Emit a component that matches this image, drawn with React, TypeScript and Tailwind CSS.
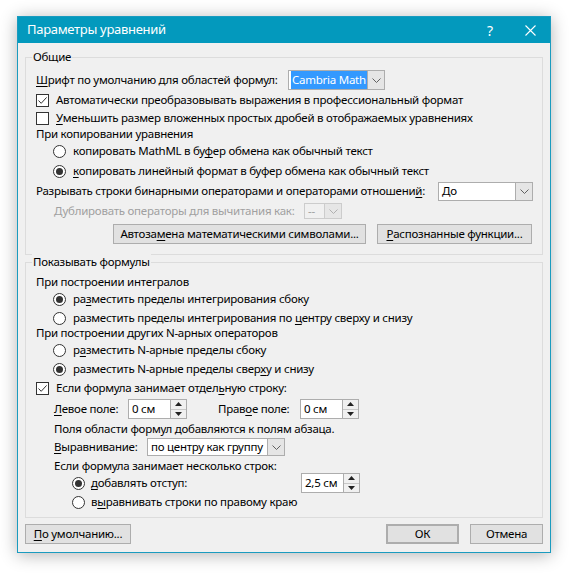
import React from "react";

const font = { fontFamily: '"Noto Sans", "Open Sans", sans-serif' };

function U({ children }: { children: React.ReactNode }) {
    return <span className="underline underline-offset-2 decoration-1">{children}</span>;
}

function Check({ checked }: { checked?: boolean }) {
    return (
        <span className="w-[13px] h-[13px] shrink-0 border border-[#333] bg-white flex items-center justify-center">
            {checked && (
                <svg width="11" height="11" viewBox="0 0 11 11">
                    <path d="M1.5 5.5 L4.2 8.3 L9.6 2.4" fill="none" stroke="#333" strokeWidth="1" />
                </svg>
            )}
        </span>
    );
}

function Radio({ checked }: { checked?: boolean }) {
    return (
        <span className="w-[13px] h-[13px] shrink-0 rounded-full border border-[#333] bg-white flex items-center justify-center">
            {checked && <span className="w-[7px] h-[7px] rounded-full bg-[#333]" />}
        </span>
    );
}

function Chevron({ color = "#606060" }: { color?: string }) {
    return (
        <svg width="9" height="5" viewBox="0 0 9 5">
            <path d="M0.5 0.5 L4.5 4.5 L8.5 0.5" fill="none" stroke={color} strokeWidth="1" />
        </svg>
    );
}

function Combo({ value, className, selected, disabled }: { value: string; className: string; selected?: boolean; disabled?: boolean }) {
    return (
        <div className={`flex shrink-0 border ${disabled ? "border-[#cccccc] bg-[#f0f0f0]" : "border-[#adadad] bg-white"} ${className}`}>
            <div className="flex-1 flex items-center pl-[2px] overflow-hidden">
                <span className={selected ? "bg-[#3399ff] text-white px-[1px]" : disabled ? "text-[#a0a0a0] px-[1px]" : "px-[1px]"}>{value}</span>
            </div>
            <div className={`w-[17px] flex items-center justify-center border-l ${disabled ? "border-[#cccccc] bg-[#e6e6e6]" : "border-[#adadad] bg-[#e5e5e5]"}`}>
                <Chevron color={disabled ? "#b0b0b0" : "#606060"} />
            </div>
        </div>
    );
}

function Spin({ value }: { value: string }) {
    return (
        <div className="w-[59px] h-[20px] shrink-0 flex border border-[#adadad] bg-white">
            <div className="flex-1 flex items-center pl-[3px]">{value}</div>
            <div className="w-[16px] flex flex-col border-l border-[#adadad] bg-[#f0f0f0]">
                <div className="flex-1 flex items-center justify-center border-b border-[#c8c8c8]">
                    <svg width="7" height="4" viewBox="0 0 7 4"><path d="M0 4 L3.5 0 L7 4 Z" fill="#222" /></svg>
                </div>
                <div className="flex-1 flex items-center justify-center">
                    <svg width="7" height="4" viewBox="0 0 7 4"><path d="M0 0 L3.5 4 L7 0 Z" fill="#222" /></svg>
                </div>
            </div>
        </div>
    );
}

function Btn({ children, className }: { children: React.ReactNode; className: string }) {
    return (
        <div className={`h-[20px] shrink-0 flex items-center justify-center bg-[#e1e1e1] border border-[#adadad] ${className}`}>
            {children}
        </div>
    );
}

function Group({ title, className, children }: { title: string; className: string; children: React.ReactNode }) {
    return (
        <div className={`relative border border-[#dcdcdc] ${className}`}>
            <span className="absolute -top-[9px] left-[6px] px-[1px] bg-[#f0f0f0] leading-[16px]">{title}</span>
            {children}
        </div>
    );
}

export default function App() {
    return (
        <div className="w-[572px] h-[575px] bg-white pt-[16px] pl-[17px] text-[11.5px] tracking-[-0.25px] text-black whitespace-nowrap" style={font}>
            <div className="w-[534px] h-[537px] flex flex-col bg-[#f0f0f0] border border-[#1a9bbf] shadow-[0_2px_16px_rgba(0,0,0,0.3)]">
                {/* заголовок */}
                <div className="h-[26px] shrink-0 bg-[#0399bd] flex items-center pl-[9px] text-white">
                    <span className="text-[13px] tracking-[-0.3px] flex-1">Параметры уравнений</span>
                    <span className="text-[14px] w-[14px] mr-[28px] text-center">?</span>
                    <svg width="11" height="11" viewBox="0 0 11 11" className="mr-[14px]">
                        <path d="M0.5 0.5 L10.5 10.5 M10.5 0.5 L0.5 10.5" stroke="#fff" strokeWidth="1.1" />
                    </svg>
                </div>

                <div className="flex-1 px-[7px] pt-[14px]">
                    <Group title="Общие" className="h-[198px] pl-[10px] pt-[14px]">
                        <div className="h-[16px] flex items-center">
                            <span className="w-[252px]"><U>Ш</U>рифт по умолчанию для областей формул:</span>
                            <Combo value="Cambria Math" selected className="w-[97px] h-[20px]" />
                        </div>
                        <div className="h-[16px] mt-[4px] flex items-center gap-[7px]">
                            <Check checked />
                            <span>Автоматически преобразовывать выражения в профессиональный формат</span>
                        </div>
                        <div className="h-[16px] mt-[2px] flex items-center gap-[7px]">
                            <Check />
                            <span><U>У</U>меньшить размер вложенных простых дробей в отображаемых уравнениях</span>
                        </div>
                        <div className="h-[16px] flex items-center">При копировании уравнения</div>
                        <div className="h-[16px] mt-[1px] pl-[17px] flex items-center gap-[7px]">
                            <Radio />
                            <span>копировать MathML в бу<U>ф</U>ер обмена как обычный текст</span>
                        </div>
                        <div className="h-[16px] mt-[4px] pl-[17px] flex items-center gap-[7px]">
                            <Radio checked />
                            <span><U>к</U>опировать линейный формат в буфер обмена как обычный текст</span>
                        </div>
                        <div className="h-[16px] mt-[4px] flex items-center">
                            <span className="w-[402px]">Разрывать строки бинарными операторами и операторами отношени<U>й</U>:</span>
                            <Combo value="До" className="w-[95px] h-[19px]" />
                        </div>
                        <div className="h-[16px] mt-[4px] pl-[18px] flex items-center">
                            <span className="w-[250px] text-[#a0a0a0]">Дублировать операторы для вычитания как:</span>
                            <Combo value="--" disabled className="w-[38px] h-[16px]" />
                        </div>
                        <div className="mt-[5px] pl-[77px] flex gap-[11px]">
                            <Btn className="w-[253px]">Автоза<U>м</U>ена математическими символами...</Btn>
                            <Btn className="w-[155px]"><U>Р</U>аспознанные функции...</Btn>
                        </div>
                    </Group>

                    <Group title="Показывать формулы" className="h-[256px] mt-[7px] pl-[10px] pt-[11px]">
                        <div className="h-[16px] flex items-center">При построении интегралов</div>
                        <div className="h-[16px] mt-[1px] pl-[17px] flex items-center gap-[7px]">
                            <Radio checked />
                            <span>ра<U>з</U>местить пределы интегрирования сбоку</span>
                        </div>
                        <div className="h-[16px] mt-[3px] pl-[17px] flex items-center gap-[7px]">
                            <Radio />
                            <span>разместить пределы интегрирования по <U>ц</U>ентру сверху и снизу</span>
                        </div>
                        <div className="h-[16px] -mt-[1px] flex items-center">При построении других N-арных операторов</div>
                        <div className="h-[16px] mt-[1px] pl-[17px] flex items-center gap-[7px]">
                            <Radio />
                            <span>р<U>а</U>зместить N-арные пределы сбоку</span>
                        </div>
                        <div className="h-[16px] mt-[3px] pl-[17px] flex items-center gap-[7px]">
                            <Radio checked />
                            <span>разместить N-арные пределы свер<U>х</U>у и снизу</span>
                        </div>
                        <div className="h-[16px] mt-[3px] flex items-center gap-[7px]">
                            <Check checked />
                            <span>Если формула занимает отдел<U>ь</U>ную строку:</span>
                        </div>
                        <div className="h-[16px] mt-[5px] pl-[18px] flex items-center">
                            <span className="w-[74px]"><U>Л</U>евое поле:</span>
                            <Spin value="0 см" />
                            <span className="w-[82px] ml-[31px]">Прав<U>о</U>е поле:</span>
                            <Spin value="0 см" />
                        </div>
                        <div className="h-[16px] mt-[4px] pl-[18px] flex items-center">Поля области формул добавляются к полям абзаца.</div>
                        <div className="h-[16px] mt-[2px] pl-[18px] flex items-center">
                            <span className="w-[93px]"><U>В</U>ыравнивание:</span>
                            <Combo value="по центру как группу" className="w-[138px] h-[18px]" />
                        </div>
                        <div className="h-[16px] mt-[3px] pl-[18px] flex items-center">Если формула занимает несколько строк:</div>
                        <div className="h-[16px] mt-[1px] pl-[36px] flex items-center">
                            <Radio checked />
                            <span className="w-[216px] pl-[6px]"><U>д</U>обавлять отступ:</span>
                            <Spin value="2,5 см" />
                        </div>
                        <div className="h-[16px] mt-[3px] pl-[36px] flex items-center gap-[6px]">
                            <Radio />
                            <span>в<U>ы</U>равнивать строки по правому краю</span>
                        </div>
                    </Group>

                    <div className="mt-[6px] flex">
                        <Btn className="w-[106px]"><U>П</U>о умолчанию...</Btn>
                        <div className="flex-1" />
                        <Btn className="w-[73px] border-2 border-[#0078d7]">ОК</Btn>
                        <Btn className="w-[73px] ml-[11px]">Отмена</Btn>
                    </div>
                </div>
            </div>
        </div>
    );
}
